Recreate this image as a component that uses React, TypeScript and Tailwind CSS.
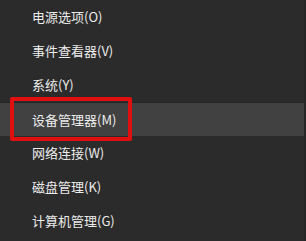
import React from "react";

const items = [
  "电源选项(O)",
  "事件查看器(V)",
  "系统(Y)",
  "设备管理器(M)",
  "网络连接(W)",
  "磁盘管理(K)",
  "计算机管理(G)",
];

export default function App() {
  return (
    <div
      className="relative w-[306px] h-[241px] bg-[#2b2b2b] overflow-hidden flex"
      style={{ fontFamily: '"Noto Sans CJK SC", "Noto Sans", sans-serif' }}
    >
      <div className="w-[304px] flex flex-col">
        {items.map((t, i) => (
          <div
            key={t}
            className={
              "h-[34px] shrink-0 flex items-center pl-[32px] text-[13px] text-[#ececec] " +
              (i === 3 ? "bg-[#414141] border-t border-[#262626]" : "")
            }
          >
            {t}
          </div>
        ))}
      </div>
      <div className="w-[2px] bg-[#262626]" />
      <div className="absolute left-[10px] top-[97px] w-[122px] h-[44px] border-[4px] border-[#e01010] rounded-[2px]" />
    </div>
  );
}
